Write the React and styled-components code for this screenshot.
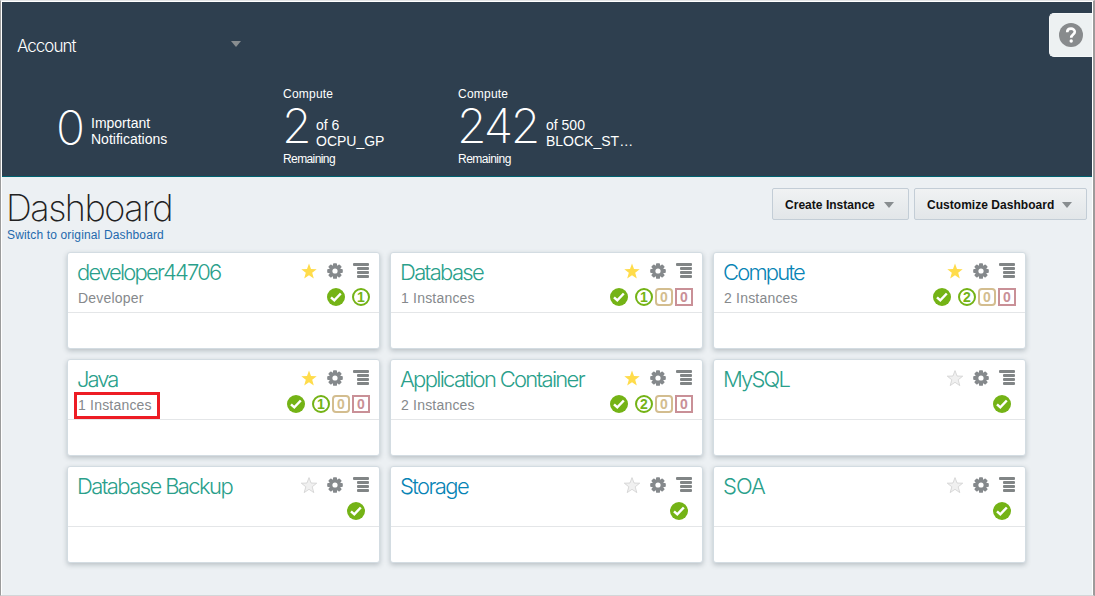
import React from "react";
import styled, { createGlobalStyle } from "styled-components";

const GlobalStyle = createGlobalStyle`
  * { box-sizing: border-box; }
  body { margin: 0; font-family: "Liberation Sans", Arial, sans-serif; background: #fff; }
`;

const thin = `font-family: Inter, "Liberation Sans", sans-serif;`;

const Frame = styled.div`
  width: 1095px;
  height: 596px;
  overflow: hidden;
  border-style: solid;
  border-width: 1px 2px 1px 1px;
  border-color: #e2e4e6 #9d9b9b #d3d6d8 #9b9b9b;
  padding: 1px 1px 0 1px;
  background: #fff;
`;

const Header = styled.header`
  position: relative;
  height: 175px;
  background: #2e3f4f;
  border-bottom: 1px solid #006270;
  color: #fff;
  padding: 34px 0 0 15px;
`;

const AccountPicker = styled.div`
  ${thin}
  display: flex;
  align-items: center;
  justify-content: space-between;
  width: 224px;
  height: 20px;
  font-size: 17px;
  font-weight: 300;
  letter-spacing: -1px;
`;

const Caret = styled.span`
  width: 0;
  height: 0;
  border: solid transparent;
  border-width: 6px 5px 0;
  border-top-color: #888d90;
  margin-top: ${(p) => p.$top || "0"};
`;

const Help = styled.button`
  position: absolute;
  top: 11px;
  right: 0;
  width: 43px;
  height: 44px;
  padding: 0 1px 0 0;
  border: 1px solid #f4f7f8;
  border-right: 0;
  border-radius: 5px 0 0 5px;
  background: #edf1f2;
  display: flex;
  align-items: center;
  justify-content: center;
`;

const Metrics = styled.div`
  display: flex;
  align-items: flex-start;
  padding: 31px 0 0 41px;
`;

const Metric = styled.div`
  width: ${(p) => p.$width};
  padding-top: ${(p) => p.$top || "0"};
`;

const MetricLabel = styled.div`
  font-size: 12px;
  line-height: 14px;
  letter-spacing: ${(p) => p.$spacing || "0.22px"};
  height: 14px;
`;

const MetricBody = styled.div`
  display: flex;
  height: 51px;
`;

const Figure = styled.span`
  ${thin}
  font-weight: 200;
  font-size: 48px;
  line-height: 37px;
  padding-top: 6px;
  letter-spacing: -2.2px;
  margin-left: ${(p) => p.$shift || "-1px"};
  width: ${(p) => p.$width};
  white-space: nowrap;
`;

const MetricUnit = styled.div`
  font-size: 14px;
  line-height: 16px;
  padding-top: ${(p) => p.$top};
  letter-spacing: 0;
  white-space: nowrap;
`;

const Main = styled.main`
  height: 418px;
  background: #ecf0f3;
`;

const TitleBar = styled.div`
  display: flex;
  justify-content: space-between;
  height: 75px;
  padding: 11px 5px 0 5px;
`;

const Title = styled.h1`
  ${thin}
  margin: 0 0 0 -1px;
  font-weight: 200;
  font-size: 36px;
  line-height: 40px;
  letter-spacing: -1.5px;
  color: #222;
`;

const SwitchLink = styled.a`
  display: block;
  font-size: 12px;
  line-height: 14px;
  color: #2369ad;
  letter-spacing: 0.15px;
  text-decoration: none;
`;

const Actions = styled.div`
  display: flex;
  gap: 5px;
`;

const ActionButton = styled.button`
  display: flex;
  align-items: center;
  justify-content: space-between;
  width: ${(p) => p.$width};
  height: 32px;
  padding: 1px 14px 0 12px;
  border: 1px solid #c3cdd6;
  border-radius: 2px;
  background: linear-gradient(#f0f2f3, #e2e6e9);
  font: bold 12px "Liberation Sans", Arial, sans-serif;
  letter-spacing: 0.03px;
  white-space: nowrap;
  color: #111;
`;

const Grid = styled.div`
  display: grid;
  grid-template-columns: repeat(3, 313px);
  gap: 10px;
  padding-left: 65px;
`;

const Card = styled.section`
  height: 97px;
  border: 1px solid #d3dce2;
  border-radius: 3px;
  background: #fff;
  box-shadow: 0 2px 5px rgba(70, 85, 95, 0.3);
`;

const CardTop = styled.div`
  height: 60px;
  display: flex;
  justify-content: space-between;
  border-bottom: 1px solid #e4e6e8;
  padding: 7px 8px 0 10px;
`;

const CardTitle = styled.h2`
  ${thin}
  margin: 0 0 0 -1px;
  font-weight: 350;
  font-size: 22px;
  line-height: 24px;
  letter-spacing: ${(p) => p.$spacing};
  white-space: nowrap;
  color: ${(p) => (p.$blue ? "#0784b5" : "#2a9f8b")};
`;

const Detail = styled.div`
  font-size: 14px;
  line-height: 16px;
  margin-top: 6px;
  letter-spacing: 0.2px;
  color: #86898c;
  width: max-content;
`;

const MarkedDetail = styled(Detail)`
  border: 3px solid #ed1c24;
  margin: 1px 0 0 -4px;
  padding: 2px 4px 3px 1px;
  width: 86px;
  height: 27px;
  line-height: 17px;
  white-space: nowrap;
`;

const Side = styled.div`
  display: flex;
  flex-direction: column;
  align-items: flex-end;
`;

const Tools = styled.div`
  display: flex;
  gap: 10px;
  height: 24px;
  padding: 3px 2px 0 0;
`;

const Statuses = styled.div`
  display: flex;
  gap: 2px;
  padding-top: 4px;
  margin-right: ${(p) => p.$inset};
`;

const Check = styled.svg`
  margin-right: ${(p) => (p.$solo ? "0" : "5px")};
`;

const tones = {
  ok: ["#74b316", "50%"],
  warn: ["#d3bd8f", "4px"],
  error: ["#c99097", "0"],
};

const Badge = styled.span`
  width: 18px;
  height: 18px;
  border: 2px solid ${(p) => tones[p.$tone][0]};
  border-radius: ${(p) => tones[p.$tone][1]};
  color: ${(p) => tones[p.$tone][0]};
  font-size: 14px;
  font-weight: bold;
  line-height: 15px;
  text-align: center;
`;

const Star = ({ on }) => (
  <svg width="16" height="16" viewBox="0 0 16 16">
    <path
      d="M8 0.6 L10 6 L15.7 6.2 L11.2 9.8 L12.8 15.6 L8 12.3 L3.2 15.6 L4.8 9.8 L0.3 6.2 L6 6 Z"
      fill={on ? "#ffdc4b" : "#f0f0f0"}
      stroke={on ? "none" : "#d0d0d0"}
      strokeWidth="0.8"
    />
  </svg>
);

const Gear = () => (
  <svg width="16" height="16" viewBox="-8 -8 16 16">
    {[0, 45, 90, 135].map((a) => (
      <rect key={a} x="-2" y="-7.8" width="4" height="15.6" rx="0.9" fill="#85898c" transform={`rotate(${a})`} />
    ))}
    <circle r="6" fill="#85898c" />
    <circle r="2.6" fill="#fff" />
  </svg>
);

const Menu = () => (
  <svg width="16" height="16" viewBox="0 0 16 16" fill="#818586">
    <rect x="0" y="0" width="16" height="3" rx="1" />
    <rect x="4" y="4" width="12" height="3" rx="1" />
    <rect x="4" y="8" width="12" height="3" rx="1" />
    <rect x="4" y="12" width="12" height="3" rx="1" />
  </svg>
);

const CheckIcon = ({ solo }) => (
  <Check $solo={solo} width="18" height="18" viewBox="0 0 18 18">
    <circle cx="9" cy="9" r="9" fill="#74b316" />
    <path d="M4 9.3 L7.3 12.3 L13.8 5.5" fill="none" stroke="#fff" strokeWidth="2.5" />
  </Check>
);

const services = [
  { name: "developer44706", detail: "Developer", fav: true, counts: [1], spacing: "-1.8px" },
  { name: "Database", detail: "1 Instances", fav: true, counts: [1, 0, 0], spacing: "-1.65px" },
  { name: "Compute", detail: "2 Instances", fav: true, counts: [2, 0, 0], blue: true, spacing: "-1.8px" },
  { name: "Java", detail: "1 Instances", fav: true, counts: [1, 0, 0], marked: true, spacing: "-2px" },
  { name: "Application Container", detail: "2 Instances", fav: true, counts: [2, 0, 0], spacing: "-1.7px" },
  { name: "MySQL", counts: [], spacing: "-1.8px" },
  { name: "Database Backup", counts: [], spacing: "-1.6px" },
  { name: "Storage", counts: [], blue: true, spacing: "-1.6px" },
  { name: "SOA", counts: [], spacing: "-1px" },
];

const toneOrder = ["ok", "warn", "error"];

const ServiceCard = ({ name, detail, fav, counts, blue, marked, spacing }) => {
  const Info = marked ? MarkedDetail : Detail;
  return (
    <Card>
      <CardTop>
        <div>
          <CardTitle $blue={blue} $spacing={spacing}>{name}</CardTitle>
          {detail && <Info>{detail}</Info>}
        </div>
        <Side>
          <Tools>
            <Star on={fav} />
            <Gear />
            <Menu />
          </Tools>
          <Statuses $inset={counts.length ? "1px" : "6px"}>
            <CheckIcon solo={!counts.length} />
            {counts.map((n, i) => (
              <Badge key={i} $tone={toneOrder[i]}>{n}</Badge>
            ))}
          </Statuses>
        </Side>
      </CardTop>
    </Card>
  );
};

export default function App() {
  return (
    <>
      <GlobalStyle />
      <Frame>
        <Header>
          <AccountPicker>
            Account <Caret $top="-4px" />
          </AccountPicker>
          <Help aria-label="Help">
            <svg width="24" height="24" viewBox="0 0 24 24">
              <circle cx="12" cy="12" r="12" fill="#888b8d" />
              <path d="M8.2 9.3 C8.2 4.4 15.8 4.6 15.8 8.8 C15.8 11.6 12.2 11.6 12.2 14.8" fill="none" stroke="#fff" strokeWidth="2.6" />
              <circle cx="12.2" cy="18" r="1.7" fill="#fff" />
            </svg>
          </Help>
          <Metrics>
            <Metric $width="225px" $top="16px">
              <MetricBody>
                <Figure $width="35px" $shift="-2px">0</Figure>
                <MetricUnit $top="12px">Important<br />Notifications</MetricUnit>
              </MetricBody>
            </Metric>
            <Metric $width="175px">
              <MetricLabel>Compute</MetricLabel>
              <MetricBody>
                <Figure $width="34px">2</Figure>
                <MetricUnit $top="16px">of 6<br />OCPU_GP</MetricUnit>
              </MetricBody>
              <MetricLabel $spacing="-0.6px">Remaining</MetricLabel>
            </Metric>
            <Metric $width="200px">
              <MetricLabel>Compute</MetricLabel>
              <MetricBody>
                <Figure $width="89px">242</Figure>
                <MetricUnit $top="16px">of 500<br />BLOCK_ST…</MetricUnit>
              </MetricBody>
              <MetricLabel $spacing="-0.5px">Remaining</MetricLabel>
            </Metric>
          </Metrics>
        </Header>
        <Main>
          <TitleBar>
            <div>
              <Title>Dashboard</Title>
              <SwitchLink>Switch to original Dashboard</SwitchLink>
            </div>
            <Actions>
              <ActionButton $width="137px">Create Instance <Caret /></ActionButton>
              <ActionButton $width="173px">Customize Dashboard <Caret /></ActionButton>
            </Actions>
          </TitleBar>
          <Grid>
            {services.map((s) => (
              <ServiceCard key={s.name} {...s} />
            ))}
          </Grid>
        </Main>
      </Frame>
    </>
  );
}
